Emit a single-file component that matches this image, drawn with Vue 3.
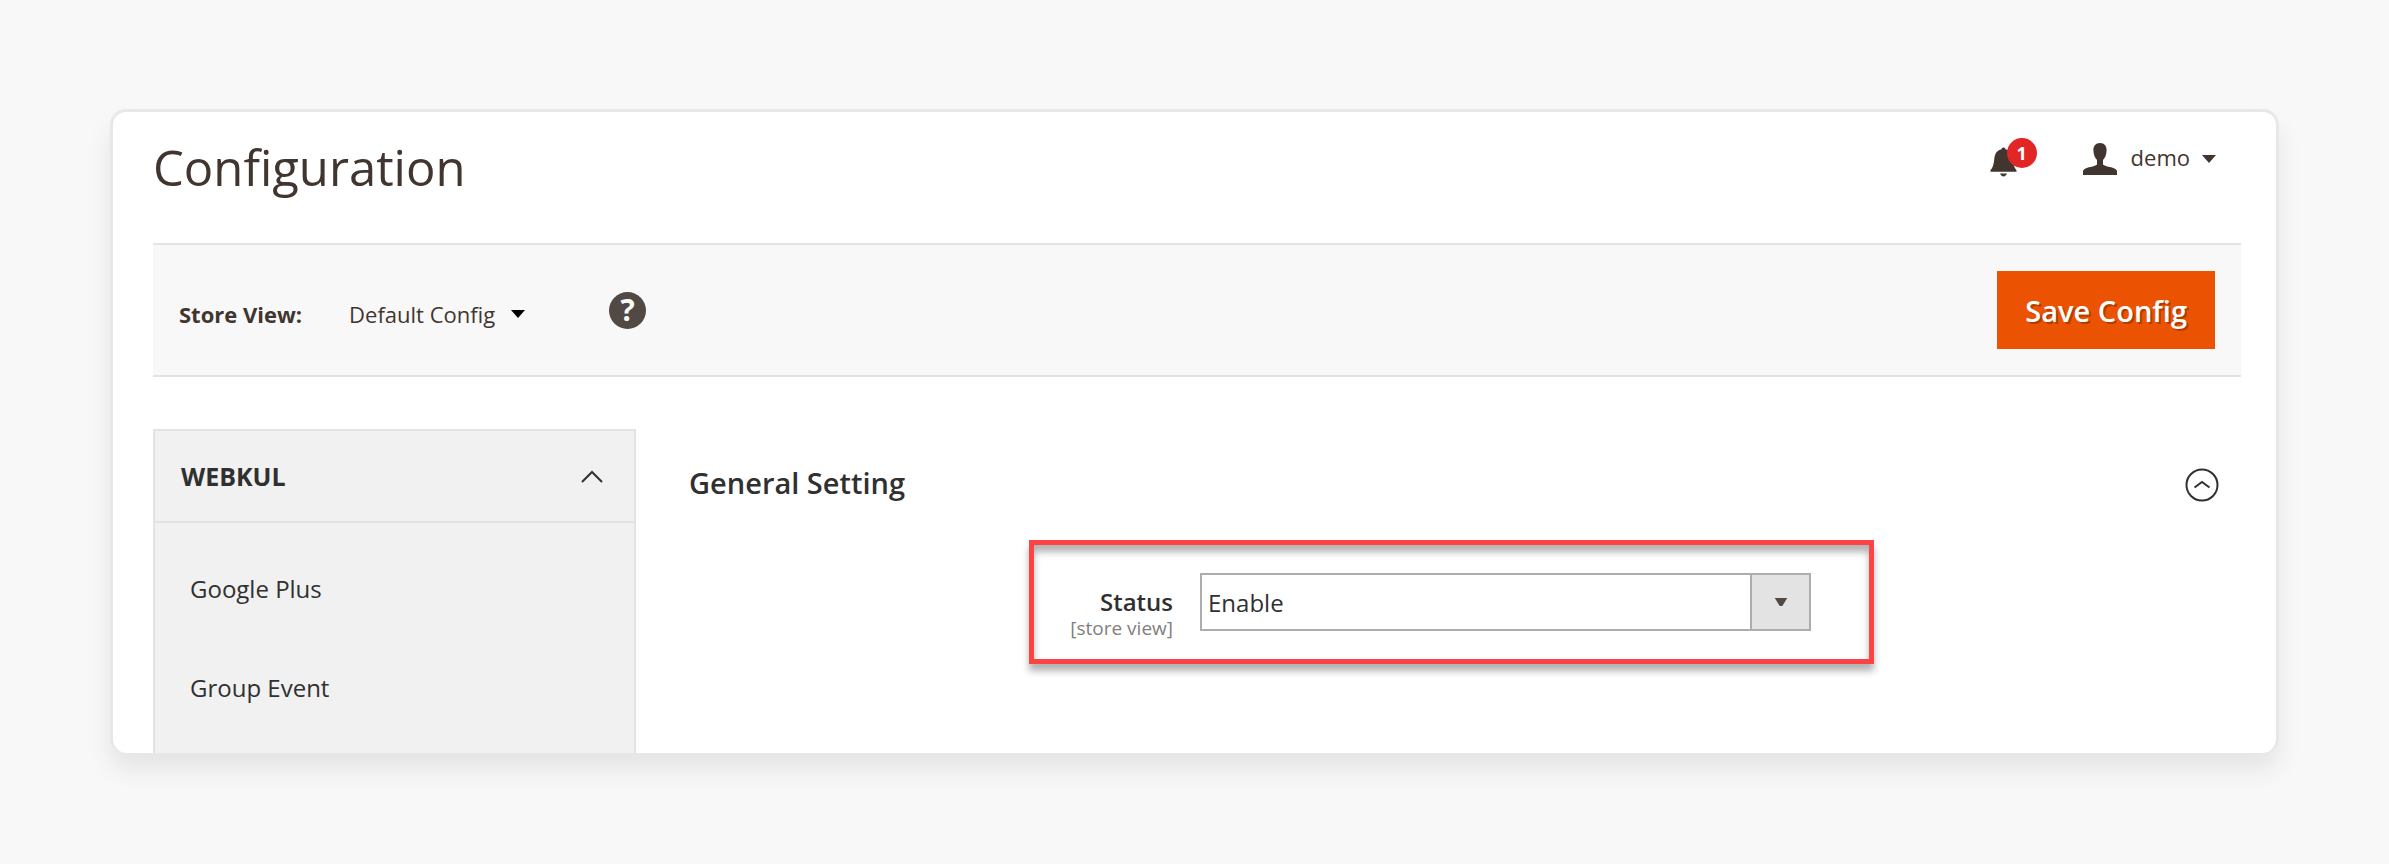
<template>
  <div class="page">
    <div class="admin-card">
      <header class="page-header">
        <h1 class="page-title">Configuration</h1>
        <div class="header-actions">
          <button class="notifications" type="button" aria-label="Notifications">
            <svg class="bell" viewBox="0 0 28 30" aria-hidden="true">
              <path d="M14 0c1.400 0 2 .8 2 1.700C21 3 23 6.500 23.500 11c.5 5 1 9 4 12.500V25H.500v-1.500C3.500 20 4 16 4.500 11 5 6.500 7 3 12 1.700 12 .8 12.600 0 14 0z" />
              <path d="M10.500 27h7c-.5 1.800-1.800 3-3.500 3s-3-1.200-3.500-3z" />
            </svg>
            <span class="badge">{{ unread }}</span>
          </button>
          <button class="account" type="button">
            <svg class="user" viewBox="0 0 34 32" aria-hidden="true">
              <path d="M17 0c4.500 0 6.800 3.200 6.600 7.500-.2 4.500-1.600 7.500-3.600 9.500v4.500c2.500 2.300 7.500 2.300 11 3.700 2 .8 3 1.800 3 3.300V32H0v-3.500c0-1.500 1-2.500 3-3.300 3.500-1.400 8.500-1.400 11-3.700V17c-2-2-3.400-5-3.600-9.500C10.200 3.200 12.500 0 17 0z" />
            </svg>
            <span class="account-name">demo</span>
            <svg class="caret" viewBox="0 0 14 8" aria-hidden="true"><path d="M0 0h14L7 8z" /></svg>
          </button>
        </div>
      </header>

      <div class="toolbar">
        <span id="store-label" class="store-label">Store View:</span>
        <button class="store-switch" type="button" aria-labelledby="store-label store-value">
          <span id="store-value">Default Config</span>
          <svg class="caret" viewBox="0 0 14 8" aria-hidden="true"><path d="M0 0h14L7 8z" /></svg>
        </button>
        <button class="help" type="button" aria-label="Help">?</button>
        <button class="save" type="button">Save Config</button>
      </div>

      <div class="columns">
        <nav class="sidebar">
          <button class="sidebar-title" type="button" :aria-expanded="navOpen" @click="navOpen = !navOpen">
            <span>WEBKUL</span>
            <svg class="chevron" viewBox="0 0 22 13" aria-hidden="true"><path d="M1 12L11 2l10 10" /></svg>
          </button>
          <ul v-show="navOpen" class="sidebar-list">
            <li v-for="item in navItems" :key="item">
              <a href="#">{{ item }}</a>
            </li>
          </ul>
        </nav>

        <main class="settings">
          <button class="section-head" type="button" :aria-expanded="sectionOpen" @click="sectionOpen = !sectionOpen">
            <span class="section-name">General Setting</span>
            <svg class="collapse" viewBox="0 0 34 34" aria-hidden="true">
              <circle cx="17" cy="17" r="15.500" />
              <path d="M9.500 19.500L17 14l7.500 5.500" />
            </svg>
          </button>
          <div v-show="sectionOpen" class="field-row">
            <div class="field">
              <label class="field-label" for="status">
                <span class="field-name">Status</span>
                <span class="field-scope">[store view]</span>
              </label>
              <div class="select-box">
                <select id="status" v-model="status">
                  <option>Enable</option>
                  <option>Disable</option>
                </select>
                <span class="select-arrow">
                  <svg class="caret" viewBox="0 0 14 9" aria-hidden="true"><path d="M0 0h14L8.500 9h-3z" /></svg>
                </span>
              </div>
            </div>
          </div>
        </main>
      </div>
    </div>
  </div>
</template>

<script setup>
import { ref } from 'vue';

const navItems = ['Google Plus', 'Group Event'];
const unread = ref(1);
const status = ref('Enable');
const navOpen = ref(true);
const sectionOpen = ref(true);
</script>

<style>
body {
  background: #f8f8f8;
}
</style>

<style scoped>
.page {
  padding: 109px 110px 108px;
  font-family: "Open Sans", "Noto Sans", sans-serif;
  color: #303030;
}
*,
*::before {
  box-sizing: border-box;
}
button {
  font: inherit;
  color: inherit;
  background: none;
  border: none;
  padding: 0;
  cursor: pointer;
}
.admin-card {
  background: #fff;
  border: 3px solid #e8e8e8;
  border-bottom-width: 1px;
  border-radius: 16px;
  padding: 0 35px 0 40px;
  box-shadow: 0 16px 24px rgba(0, 0, 0, 0.08);
  overflow: hidden;
}
.page-header {
  display: flex;
  justify-content: space-between;
  align-items: flex-start;
  height: 131px;
  padding: 22px 25px 0 0;
}
.page-title {
  margin: 0;
  font-size: 49px;
  line-height: 66px;
  font-weight: 400;
  color: #41362f;
}
.header-actions {
  display: flex;
  align-items: center;
  height: 50px;
  gap: 46px;
}
.notifications {
  position: relative;
  width: 47px;
  height: 32px;
}
.bell {
  display: block;
  width: 27px;
  height: 30px;
  margin-top: 4px;
  fill: #41362f;
}
.badge {
  position: absolute;
  top: -5px;
  right: 0;
  width: 30px;
  height: 30px;
  border-radius: 50%;
  background: #e22626;
  color: #fff;
  font-size: 18px;
  line-height: 30px;
  font-weight: 700;
}
.account {
  display: flex;
  align-items: center;
  gap: 12px;
  font-size: 22px;
  line-height: 32px;
  color: #41362f;
}
.account-name {
  padding: 0 0 4px 2px;
}
.user {
  width: 34px;
  height: 32px;
  fill: #41362f;
}
.caret {
  width: 14px;
  height: 8px;
  fill: currentColor;
}
.toolbar {
  display: flex;
  align-items: center;
  height: 134px;
  padding: 0 26px;
  background: #f8f8f8;
  border-top: 2px solid #e3e3e3;
  border-bottom: 2px solid #e3e3e3;
}
.store-label,
.store-switch {
  padding-top: 8px;
  font-size: 22px;
  line-height: 30px;
  color: #41362f;
}
.store-label {
  font-weight: 700;
}
.store-switch {
  display: flex;
  align-items: center;
  gap: 16px;
  margin-left: 47px;
}
.store-switch .caret {
  fill: #000;
}
.help {
  width: 37px;
  height: 37px;
  margin-left: 84px;
  border-radius: 50%;
  background: #514943;
  color: #f8f8f8;
  font-size: 30px;
  line-height: 36px;
  font-weight: 700;
}
.save {
  height: 78px;
  margin-left: auto;
  padding: 0 28px;
  background: #eb5202;
  color: #fff;
  font-size: 29px;
  font-weight: 600;
  text-shadow: 2px 2px 0 rgba(0, 0, 0, 0.25);
}
.columns {
  display: grid;
  grid-template-columns: 483fr 1552fr;
  gap: 53px;
  padding-top: 52px;
}
.sidebar {
  background: #f1f1f1;
  border: 2px solid #e3e3e3;
  border-bottom: none;
}
.sidebar-title {
  display: flex;
  align-items: center;
  justify-content: space-between;
  width: 100%;
  height: 92px;
  padding: 0 31px 0 26px;
  border-bottom: 2px solid #e3e3e3;
  font-size: 25px;
  line-height: 34px;
  font-weight: 700;
}
.chevron {
  width: 22px;
  height: 13px;
  fill: none;
  stroke: #303030;
  stroke-width: 2;
}
.sidebar-list {
  margin: 0;
  padding: 16px 0;
  list-style: none;
}
.sidebar-list a {
  display: block;
  padding: 0 35px;
  font-size: 24px;
  line-height: 99px;
  color: #303030;
  text-decoration: none;
}
.section-head {
  display: flex;
  align-items: center;
  justify-content: space-between;
  width: 100%;
  height: 111px;
  padding-right: 22px;
  font-size: 29px;
  line-height: 38px;
  font-weight: 600;
}
.section-name {
  padding-bottom: 4px;
}
.collapse {
  width: 34px;
  height: 34px;
  fill: none;
  stroke: #303030;
  stroke-width: 2;
}
.field-row {
  display: grid;
  grid-template-columns: 340fr 845fr 367fr;
}
.field {
  grid-column: 2;
  display: grid;
  grid-template-columns: 139fr 611fr;
  gap: 27px;
  height: 124px;
  padding: 28px 58px 0 0;
  border: 5px solid #fd4343;
  box-shadow: 0 7px 7px rgba(0, 0, 0, 0.3), inset 0 7px 7px rgba(0, 0, 0, 0.3);
}
.field-label {
  display: flex;
  flex-direction: column;
  align-items: flex-end;
  padding-top: 13px;
}
.field-name {
  font-size: 24px;
  line-height: 32px;
  font-weight: 600;
}
.field-scope {
  font-size: 19px;
  line-height: 20px;
  color: #808080;
}
.select-box {
  position: relative;
  height: 58px;
}
.select-box select {
  appearance: none;
  width: 100%;
  height: 58px;
  padding: 0 70px 0 6px;
  border: 2px solid #adadad;
  border-radius: 0;
  background: #fff;
  color: #303030;
  font-family: inherit;
  font-size: 24px;
}
.select-arrow {
  position: absolute;
  top: 2px;
  right: 2px;
  bottom: 2px;
  width: 59px;
  display: flex;
  align-items: center;
  justify-content: center;
  border-left: 2px solid #adadad;
  background: #e3e3e3;
  color: #514943;
  pointer-events: none;
}
</style>
